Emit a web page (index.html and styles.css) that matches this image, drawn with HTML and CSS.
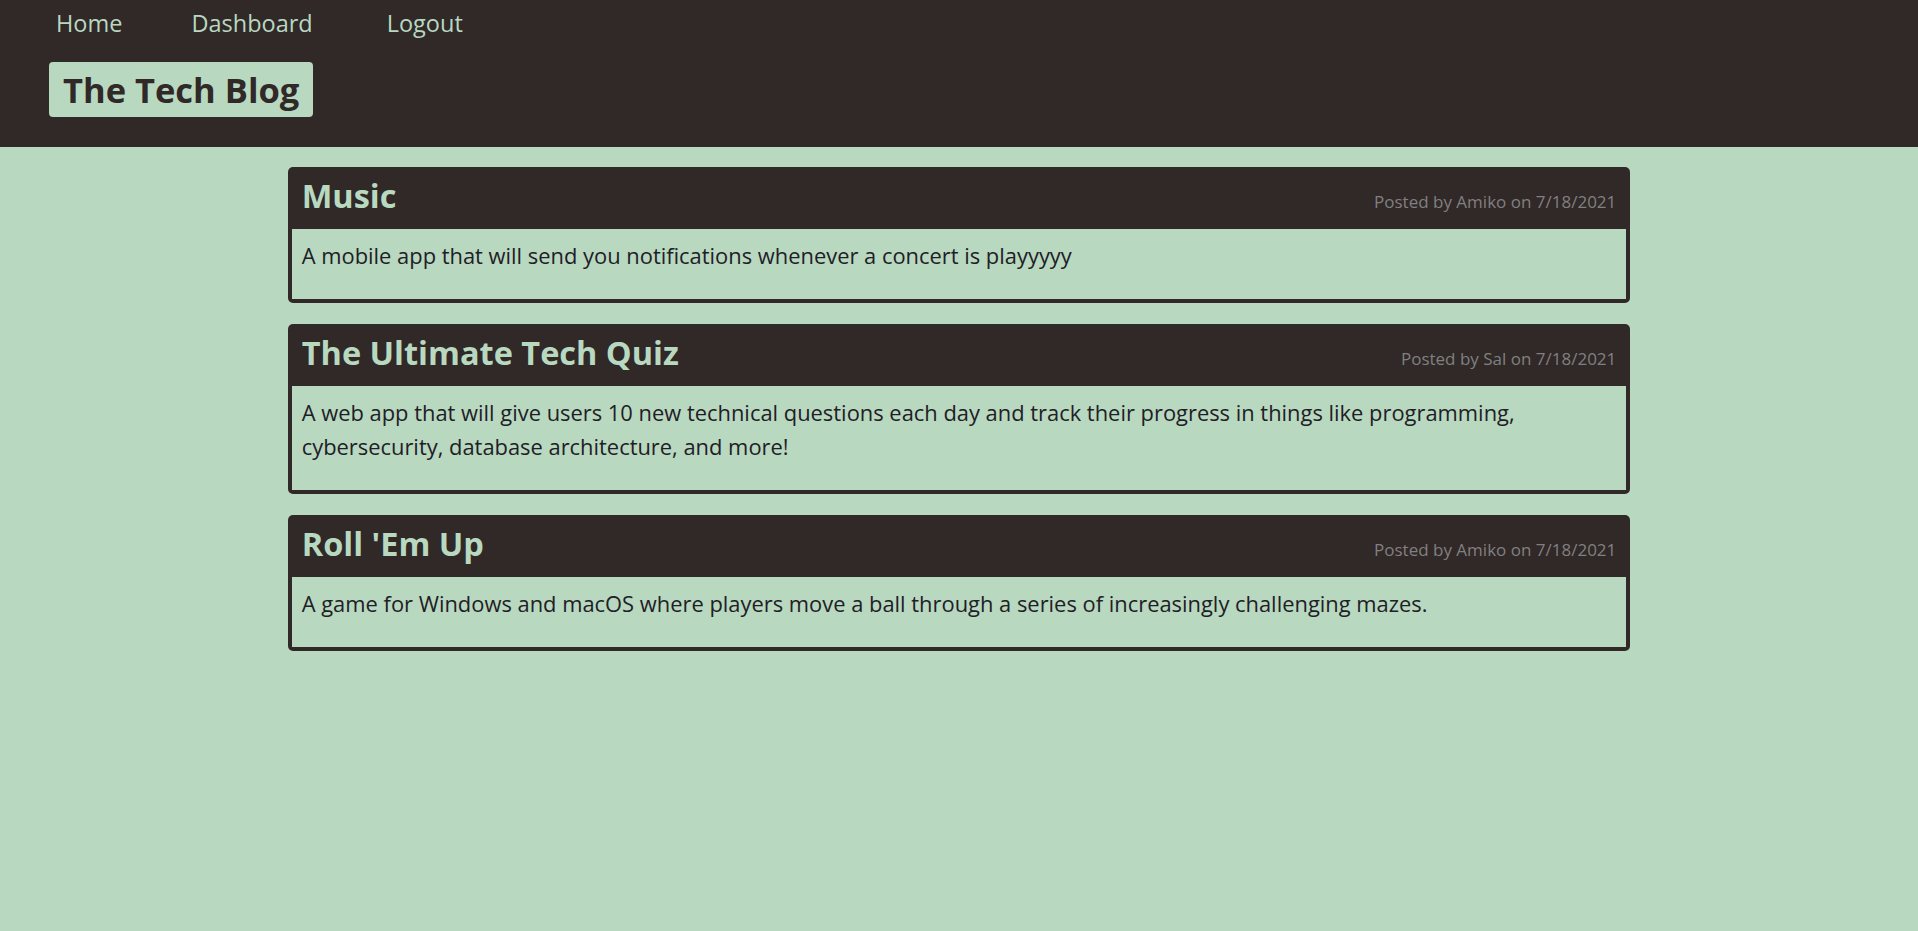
FILE: index.html
```html
<!DOCTYPE html>
<html lang="en">
<head>
<meta charset="utf-8">
<title>The Tech Blog</title>
<link rel="stylesheet" href="styles.css">
</head>
<body>
<header class="site-header">
  <nav class="nav">
    <a class="nav-link" href="#">Home</a>
    <a class="nav-link" href="#">Dashboard</a>
    <a class="nav-link nav-link-last" href="#">Logout</a>
  </nav>
  <h1 class="brand">The Tech Blog</h1>
</header>
<main class="posts">
  <article class="post">
    <div class="post-head">
      <h2 class="post-title">Music</h2>
      <span class="post-meta">Posted by Amiko on 7/18/2021</span>
    </div>
    <div class="post-body">
      <p>A mobile app that will send you notifications whenever a concert is playyyyy</p>
    </div>
  </article>
  <article class="post">
    <div class="post-head">
      <h2 class="post-title">The Ultimate Tech Quiz</h2>
      <span class="post-meta">Posted by Sal on 7/18/2021</span>
    </div>
    <div class="post-body">
      <p>A web app that will give users 10 new technical questions each day and track their progress in things like programming, cybersecurity, database architecture, and more!</p>
    </div>
  </article>
  <article class="post">
    <div class="post-head">
      <h2 class="post-title">Roll 'Em Up</h2>
      <span class="post-meta">Posted by Amiko on 7/18/2021</span>
    </div>
    <div class="post-body">
      <p>A game for Windows and macOS where players move a ball through a series of increasingly challenging mazes.</p>
    </div>
  </article>
</main>
</body>
</html>
```
FILE: styles.css
```css
html, body {
  margin: 0;
  padding: 0;
}
body {
  background: #b8d8c0;
  font-family: "Open Sans", "Noto Sans", sans-serif;
  color: #1f2026;
  min-height: 931px;
}
.site-header {
  background: #312828;
  height: 147px;
  box-sizing: border-box;
}
.nav {
  display: flex;
  align-items: center;
  height: 46px;
  padding-left: 22px;
}
.nav-link {
  color: #b8d8c0;
  text-decoration: none;
  font-size: 23.5px;
  padding: 0 35px 0 34px;
}
.nav-link-last {
  margin-left: 5px;
}
.brand {
  display: inline-block;
  margin: 16px 0 0 49px;
  padding: 0 14px;
  height: 55px;
  line-height: 55px;
  background: #b8d8c0;
  color: #312828;
  border-radius: 4px;
  font-size: 34.5px;
  font-weight: 700;
}
.posts {
  width: 70%;
  margin: 20px auto 0;
}
.post {
  background: #312828;
  border-radius: 5px;
  padding: 4px;
  margin-bottom: 21px;
}
.post-head {
  display: flex;
  justify-content: space-between;
  align-items: baseline;
  height: 58px;
  padding: 0 10px 0 10px;
}
.post-title {
  margin: 0;
  color: #b8d8c0;
  font-size: 32.5px;
  font-weight: 700;
  line-height: 50px;
}
.post-meta {
  color: #808080;
  font-size: 17px;
}
.post-body {
  background: #b8d8c0;
  padding: 10px 12px 26px 10px;
}
.post-body p {
  margin: 0;
  font-size: 21.9px;
  line-height: 34px;
}
```
